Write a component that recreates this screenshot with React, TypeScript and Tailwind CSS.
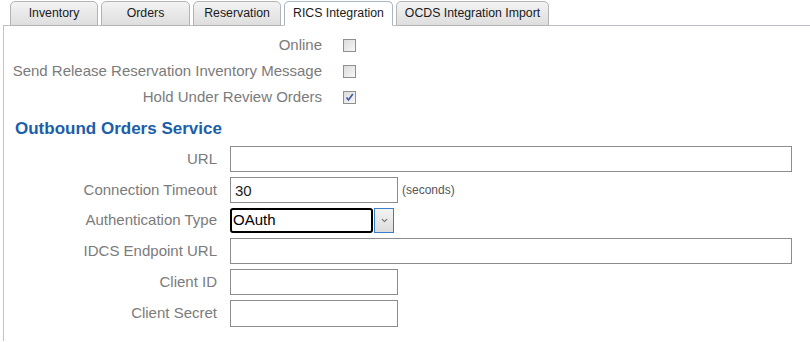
import { ChevronDown } from "lucide-react";

const TABS = [
  { name: "Inventory", w: "w-[88px]" },
  { name: "Orders", w: "w-[89px]" },
  { name: "Reservation", w: "w-[88px]" },
  { name: "RICS Integration", w: "w-[109px]", active: true },
  { name: "OCDS Integration Import", w: "w-[153px]" },
];

function Checkbox({ checked }: { checked?: boolean }) {
  return (
    <span className="flex h-[13px] w-[13px] items-center justify-center border border-[#8e8f8f] bg-gradient-to-br from-[#dcdcdc] to-[#f7f7f7]">
      {checked && (
        <svg width="9" height="9" viewBox="0 0 9 9">
          <path d="M1.5 4.5 L3.5 7 L7.8 1" fill="none" stroke="#3b59a8" strokeWidth="1.6" />
        </svg>
      )}
    </span>
  );
}

function Field({ label, children }: { label: string; children: React.ReactNode }) {
  return (
    <div className="flex items-center">
      <div className="w-[214px] pr-[1px] text-right text-[15px] text-[#7b7b7b]">{label}</div>
      <div className="ml-[12px] flex items-center">{children}</div>
    </div>
  );
}

export default function App() {
  return (
    <div className="h-[342px] w-[810px] bg-white" style={{ fontFamily: '"Liberation Sans", Arial, sans-serif' }}>
      <div className="ml-[3px] flex gap-[3px] border-b border-[#b9c0c9] pl-[7px] pt-[1px]">
        {TABS.map((t) => (
          <div
            key={t.name}
            className={`${t.w} -mb-px flex h-[25px] items-center justify-center rounded-t-[5px] border text-[12.3px] text-[#1a1a1a] ${
              t.active
                ? "border-[#a8b6c6] border-b-white bg-white"
                : "border-[#b4b4b4] bg-gradient-to-b from-[#f3f3f3] to-[#dedede]"
            }`}
          >
            {t.name}
          </div>
        ))}
      </div>
      <div className="ml-[3px] h-[315px] border-l border-[#c4c4c4] pt-[6px]">
        {[
          { label: "Online" },
          { label: "Send Release Reservation Inventory Message" },
          { label: "Hold Under Review Orders", checked: true },
        ].map((r) => (
          <div key={r.label} className="flex h-[26px] items-center">
            <div className="w-[318px] text-right text-[15px] text-[#7b7b7b]">{r.label}</div>
            <div className="ml-[21px]">
              <Checkbox checked={r.checked} />
            </div>
          </div>
        ))}
        <div className="flex h-[36px] items-center pl-[11px] pt-[2px] text-[17px] font-bold text-[#1b5ea9]">
          Outbound Orders Service
        </div>
        <div className="flex flex-col gap-[5px]">
          <Field label="URL">
            <input className="h-[26px] w-[562px] border border-[#8c8c8c] px-1 text-[14px] outline-none" />
          </Field>
          <Field label="Connection Timeout">
            <input
              defaultValue="30"
              className="h-[26px] w-[168px] border border-[#8c8c8c] px-1 text-[15px] text-[#222] outline-none"
            />
            <span className="ml-[4px] text-[12px] text-[#555]">(seconds)</span>
          </Field>
          <Field label="Authentication Type">
            <div className="flex h-[25px] w-[143px] items-center rounded-[3px] border-2 border-black pl-[1px] text-[15px] text-black">
              OAuth
            </div>
            <div className="ml-px flex h-[25px] w-[20px] items-center justify-center border border-[#3a7fc6] bg-gradient-to-b from-[#f4f4f4] to-[#dcdcdc]">
              <ChevronDown size={9} strokeWidth={3.5} color="#7a7a7a" />
            </div>
          </Field>
          <Field label="IDCS Endpoint URL">
            <input className="h-[26px] w-[562px] border border-[#8c8c8c] px-1 text-[14px] outline-none" />
          </Field>
          <Field label="Client ID">
            <input className="h-[26px] w-[168px] border border-[#8c8c8c] px-1 text-[14px] outline-none" />
          </Field>
          <Field label="Client Secret">
            <input className="h-[27px] w-[168px] border border-[#8c8c8c] px-1 text-[14px] outline-none" />
          </Field>
        </div>
      </div>
    </div>
  );
}
